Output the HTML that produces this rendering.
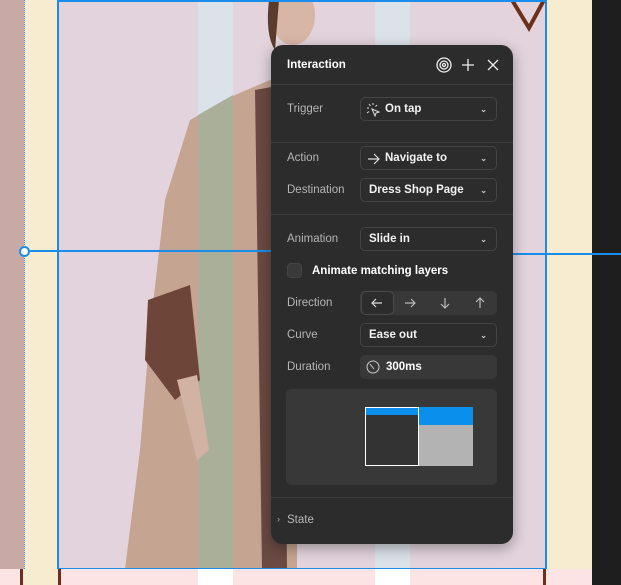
<!DOCTYPE html>
<html><head><style>
*{margin:0;padding:0;box-sizing:border-box}
body{width:621px;height:585px;overflow:hidden;position:relative;background:#f8ecd0;font-family:"Liberation Sans",sans-serif}
.abs{position:absolute}
.panel{left:271px;top:45px;width:242px;height:499px;background:#2c2c2c;border-radius:12px;box-shadow:0 4px 14px rgba(0,0,0,.35);color:#fff;font-size:11.5px}
.hr{position:absolute;left:0;right:0;height:1px;background:#3d3d3d}
.lbl{position:absolute;left:16px;color:#b5b5b5;font-size:11.5px}
.sel{position:absolute;left:89px;width:137px;height:24px;border:1px solid #444;border-radius:5px;font-size:11.5px;line-height:23px;padding-left:8px;font-weight:bold;color:#f2f2f2}
.sel .chev{position:absolute;right:9px;top:0;font-size:8px;color:#ccc}
</style></head><body>
<div class="abs" style="left:0;top:0;width:24px;height:569px;background:#c9a9a6"></div>
<div class="abs" style="left:592px;top:0;width:29px;height:585px;background:#1e1e1e"></div>
<div class="abs" style="left:57px;top:0;width:490px;height:569px;background:#e3d3dc;overflow:hidden">
<div class="abs" style="left:141px;top:0;width:35px;height:569px;background:#dce2e9"></div>
<div class="abs" style="left:318px;top:0;width:35px;height:569px;background:#dce2e9"></div>
<svg class="abs" style="left:0;top:0" width="490" height="569">
<polygon points="455,0 472,28 487,0" fill="none" stroke="#6b2f1a" stroke-width="4"/>
<ellipse cx="236" cy="15" rx="22" ry="30" fill="#d8b6a6"/>
<path d="M212,0 Q208,35 218,50 L222,0 Z" fill="#5b3b2c"/>
<polygon points="178,95 213,80 240,85 240,569 68,569 83,450 93,330 108,200 133,120" fill="#c5a592"/>
<polygon points="141,115 176,95 176,569 141,569" fill="#aaaf99"/>
<polygon points="198,90 225,85 230,569 205,569" fill="#6a4a42"/>
<polygon points="91,300 133,285 143,380 118,400 88,360" fill="#6e4639"/>
<polygon points="120,380 140,375 152,450 140,460" fill="#d2b2a2"/>
</svg>
</div>
<div class="abs" style="left:57px;top:0;width:490px;height:570px;border:2px solid #1a8cec"></div>
<div class="abs" style="left:24px;top:0;height:569px;border-left:1px dotted #1a8cec"></div>
<div class="abs" style="left:0;top:569px;width:592px;height:16px;background:#fde4e4"></div>
<div class="abs" style="left:198px;top:569px;width:35px;height:16px;background:#fff"></div>
<div class="abs" style="left:375px;top:569px;width:35px;height:16px;background:#fff"></div>
<div class="abs" style="left:24px;top:569px;width:33px;height:16px;background:#f8ecd0"></div>
<div class="abs" style="left:20px;top:569px;width:3px;height:16px;background:#6b2f1a"></div>
<div class="abs" style="left:58px;top:569px;width:3px;height:16px;background:#6b2f1a"></div>
<div class="abs" style="left:543px;top:569px;width:3px;height:16px;background:#6b2f1a"></div>
<div class="abs" style="left:24px;top:250px;width:247px;height:2px;background:#1a8cec"></div>
<div class="abs" style="left:513px;top:253px;width:108px;height:2px;background:#1a8cec"></div>
<div class="abs" style="left:19px;top:246px;width:11px;height:11px;border:2px solid #1a8cec;border-radius:50%;background:#fff"></div>

<div class="abs panel">
<div class="abs" style="left:16px;top:14px;font-weight:bold;font-size:11.5px">Interaction</div>
<svg class="abs" style="left:165px;top:12px" width="70" height="16" fill="none" stroke="#eee" stroke-width="1.3">
<circle cx="8" cy="8" r="7"/><circle cx="8" cy="8" r="4"/><circle cx="8" cy="8" r="1.5"/>
<path d="M32 2v12M26 8h12"/><path d="M52 3l10 10M62 3l-10 10"/></svg>
<div class="hr" style="top:39px"></div>
<div class="lbl" style="top:58px">Trigger</div>
<div class="sel" style="top:52px;padding-left:24px"><svg class="abs" style="left:5px;top:5px" width="14" height="14" fill="none" stroke="#ddd" stroke-width="1"><path d="M6 6l3 7 1-3 3-1z M3 1l1.5 2 M1 5h2 M7 0v2 M11 2l-1.5 1.5 M1 10l2-1.5"/></svg>On tap<span class="chev">⌄</span></div>
<div class="hr" style="top:97px"></div>
<div class="lbl" style="top:107px">Action</div>
<div class="sel" style="top:101px;padding-left:24px"><svg class="abs" style="left:6px;top:6px" width="14" height="12" fill="none" stroke="#ddd" stroke-width="1.2"><path d="M1 6h11M7 1l5 5-5 5"/></svg>Navigate to<span class="chev">⌄</span></div>
<div class="lbl" style="top:139px">Destination</div>
<div class="sel" style="top:133px">Dress Shop Page<span class="chev">⌄</span></div>
<div class="hr" style="top:169px"></div>
<div class="lbl" style="top:188px">Animation</div>
<div class="sel" style="top:182px">Slide in<span class="chev">⌄</span></div>
<div class="abs" style="left:16px;top:218px;width:15px;height:15px;border-radius:4px;background:#3a3a3a;border:1px solid #444"></div>
<div class="abs" style="left:41px;top:220px;font-weight:bold">Animate matching layers</div>
<div class="lbl" style="top:252px">Direction</div>
<div class="abs" style="left:89px;top:246px;width:137px;height:24px;background:#383838;border-radius:5px"></div>
<div class="abs" style="left:90px;top:246px;width:33px;height:24px;border:1px solid #4a4a4a;border-radius:5px;background:#2c2c2c"></div>
<svg class="abs" style="left:89px;top:246px" width="137" height="24" fill="none" stroke="#ddd" stroke-width="1.2">
<path d="M12 12h10M16 8l-4 4 4 4"/><path d="M45 12h10M51 8l4 4-4 4" stroke="#bbb"/><path d="M85 7v10M81 13l4 4 4-4" stroke="#bbb"/><path d="M120 7v10M116 11l4-4 4 4" stroke="#bbb"/></svg>
<div class="lbl" style="top:284px">Curve</div>
<div class="sel" style="top:278px">Ease out<span class="chev">⌄</span></div>
<div class="lbl" style="top:316px">Duration</div>
<div class="abs" style="left:89px;top:310px;width:137px;height:24px;background:#383838;border-radius:5px;font-weight:bold;line-height:25px;padding-left:26px">300ms</div>
<svg class="abs" style="left:95px;top:315px" width="14" height="14" fill="none" stroke="#ccc" stroke-width="1"><circle cx="7" cy="7" r="6"/><path d="M4 4l4 5"/></svg>
<div class="abs" style="left:15px;top:344px;width:211px;height:96px;background:#383838;border-radius:5px"></div>
<div class="abs" style="left:94px;top:362px;width:54px;height:59px;border:1px solid #fff;background:#333"><div style="height:7px;background:#0b8fec"></div></div>
<div class="abs" style="left:148px;top:362px;width:54px;height:59px;background:#b3b3b3"><div style="height:18px;background:#0b8fec"></div></div>
<div class="hr" style="top:452px"></div>
<div class="abs" style="left:6px;top:469px;color:#aaa;font-size:9px">›</div>
<div class="lbl" style="top:469px">State</div>
</div>
</body></html>
